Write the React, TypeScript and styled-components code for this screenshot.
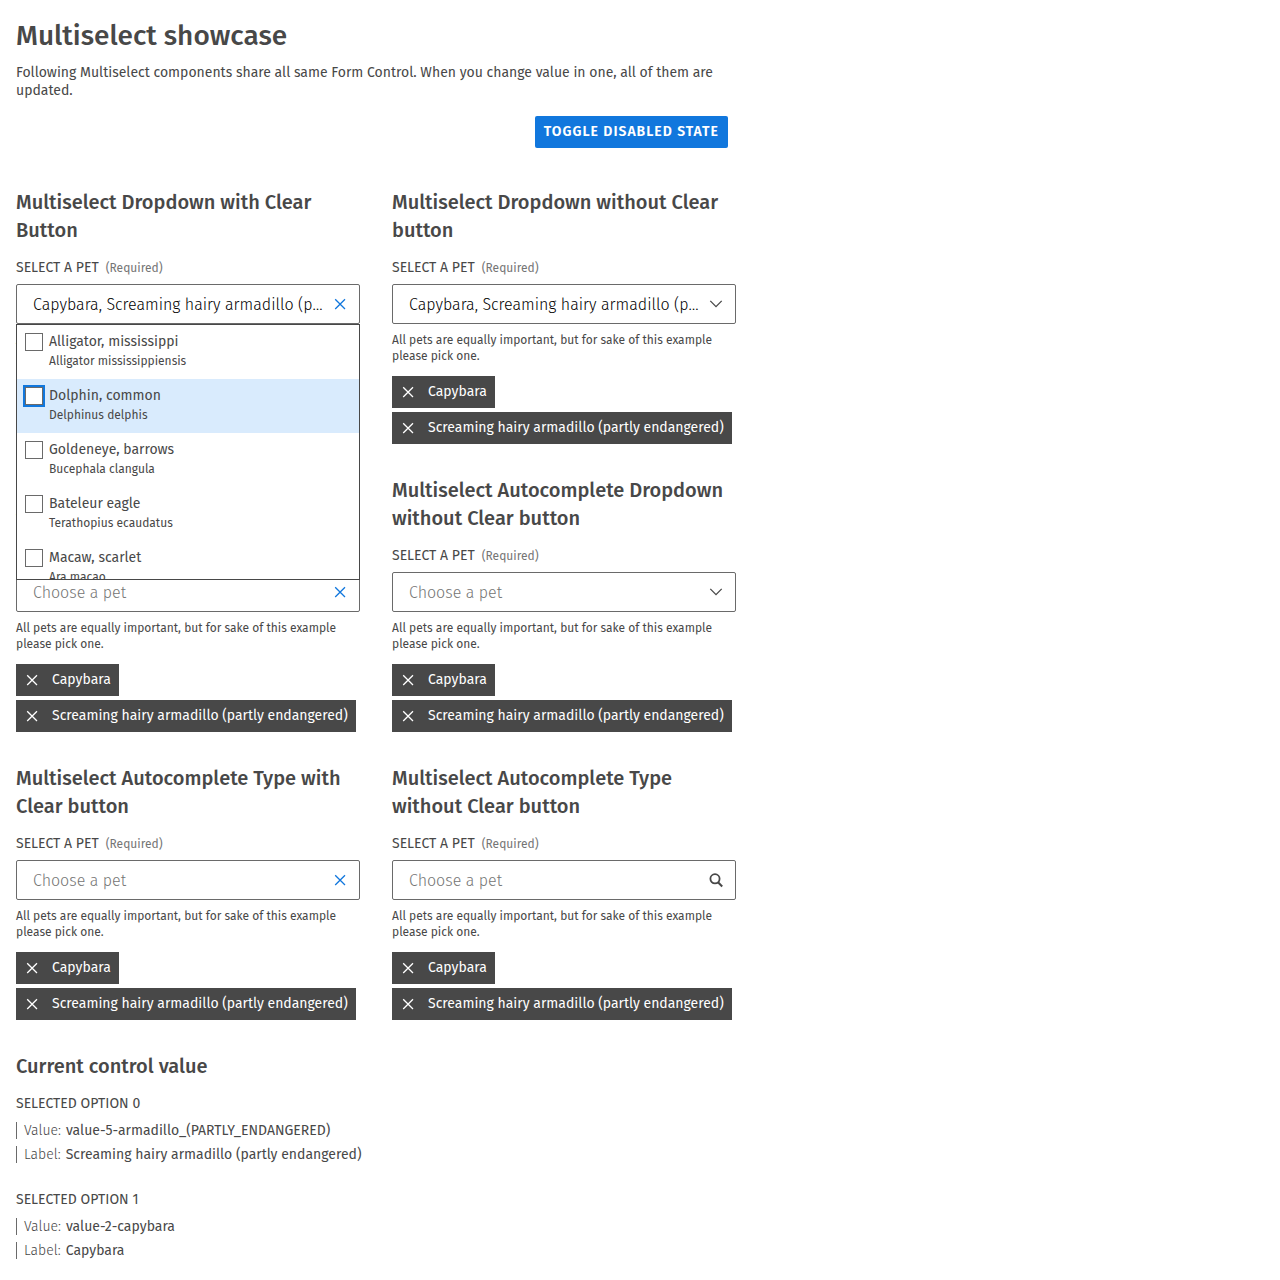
import { useId, useState } from 'react';
import styled, { createGlobalStyle, css } from 'styled-components';

const color = {
  text: '#484848',
  value: '#000',
  muted: '#757575',
  placeholder: '#757575',
  border: '#6a6a6a',
  primary: '#1177dd',
  highlight: '#d9ebfd',
};

const GlobalStyle = createGlobalStyle`
  *, *::before, *::after { box-sizing: border-box; }
  body {
    margin: 0;
    background: #fff;
    color: ${color.text};
    font-family: 'Fira Sans', 'Open Sans', 'Noto Sans', sans-serif;
    font-size: 14px;
    line-height: 18px;
  }
  h1, h2, h3, p, ul, dl, dd { margin: 0; padding: 0; }
  button, input { font: inherit; color: inherit; }
`;

const Page = styled.main`
  max-width: 752px;
  padding: 16px;
`;

const PageHeader = styled.header`
  display: flex;
  flex-direction: column;
  padding-right: 8px;
  margin-bottom: 40px;
`;

const PageTitle = styled.h1`
  margin-bottom: 8px;
  font-size: 28px;
  font-weight: 500;
  line-height: 40px;
`;

const PrimaryButton = styled.button`
  align-self: flex-end;
  height: 32px;
  margin-top: 16px;
  padding: 0 9px;
  border: 0;
  border-radius: 2px;
  background: ${color.primary};
  color: #fff;
  font-weight: 600;
  letter-spacing: 1px;
  text-transform: uppercase;
  cursor: pointer;
`;

const Grid = styled.div`
  display: grid;
  grid-template-columns: repeat(2, minmax(0, 1fr));
  gap: 32px;
`;

const SectionTitle = styled.h2`
  margin-bottom: 15px;
  font-size: 20px;
  font-weight: 500;
  line-height: 28px;
`;

const LabelRow = styled.div`
  display: flex;
  align-items: baseline;
  gap: 7px;
  margin-bottom: 7px;
`;

const FieldLabel = styled.label`
  text-transform: uppercase;
`;

const Required = styled.span`
  color: ${color.muted};
  font-size: 12px;
`;

const Field = styled.div`
  position: relative;
`;

const Control = styled.div<{ $disabled: boolean }>`
  display: flex;
  align-items: center;
  height: 40px;
  padding: 0 11px 0 16px;
  border: 1px solid ${color.border};
  border-radius: 2px;
  background: #fff;
  opacity: ${(p) => (p.$disabled ? 0.5 : 1)};
`;

const TextInput = styled.input`
  flex: 1;
  min-width: 0;
  height: 36px;
  padding: 0;
  border: 0;
  outline: 0;
  background: none;
  color: ${color.value};
  font-size: 16px;
  font-weight: 300;
  text-overflow: ellipsis;

  &::placeholder {
    color: ${color.placeholder};
    opacity: 1;
  }
`;

const IconButton = styled.button<{ $accent?: boolean }>`
  display: flex;
  flex: none;
  margin-left: 8px;
  padding: 0;
  border: 0;
  background: none;
  color: ${(p) => (p.$accent ? color.primary : color.text)};
  cursor: pointer;
`;

const Help = styled.p`
  margin: 8px 0 12px;
  font-size: 12px;
  line-height: 16px;
`;

const Tags = styled.ul`
  display: flex;
  flex-direction: column;
  align-items: flex-start;
  gap: 4px;
  list-style: none;
`;

const Tag = styled.button`
  display: flex;
  align-items: center;
  gap: 12px;
  height: 32px;
  padding: 0 8px;
  border: 0;
  background: ${color.text};
  color: #fff;
  white-space: nowrap;
  cursor: pointer;
`;

const Panel = styled.ul`
  position: absolute;
  z-index: 1;
  top: 100%;
  left: 0;
  right: 0;
  height: 256px;
  overflow-y: auto;
  scrollbar-width: none;
  border: 1px solid ${color.text};
  background: #fff;
  list-style: none;
`;

const Option = styled.label<{ $active: boolean }>`
  display: flex;
  align-items: flex-start;
  gap: 6px;
  padding: 8px 8px 10px;
  ${(p) =>
    p.$active &&
    css`
      background: ${color.highlight};
    `}
`;

const Checkbox = styled.input<{ $active: boolean }>`
  appearance: none;
  flex: none;
  width: 18px;
  height: 18px;
  margin: 0;
  border: 1px solid ${color.border};
  background: #fff;
  outline: ${(p) => (p.$active ? `2px solid ${color.primary}` : 'none')};

  &:checked {
    background: ${color.primary};
  }
`;

const OptionText = styled.span`
  display: flex;
  flex-direction: column;
  gap: 2px;
`;

const OptionNote = styled.small`
  font-size: 12px;
  line-height: 16px;
`;

const Values = styled.section`
  margin-top: 32px;
`;

const ValueGroup = styled.div`
  & + & {
    margin-top: 28px;
  }
`;

const ValueTitle = styled.h3`
  margin-bottom: 9px;
  font-size: 14px;
  font-weight: 400;
  line-height: 18px;
  text-transform: uppercase;
`;

const ValueList = styled.dl`
  display: flex;
  flex-direction: column;
  gap: 7px;
`;

const ValueRow = styled.div`
  display: flex;
  gap: 5px;
  padding-left: 7px;
  border-left: 1px solid ${color.border};
  line-height: 17px;
`;

const ValueName = styled.dt`
  font-weight: 300;
`;

const ValueData = styled.dd`
  font-weight: 400;
`;

const CloseIcon = () => (
  <svg width="16" height="16" viewBox="0 0 16 16" fill="none" stroke="currentColor" strokeWidth="1.3" aria-hidden="true">
    <path d="M3.2 3.2l9.8 9.8M13 3.2L3.2 13" />
  </svg>
);

const ChevronIcon = () => (
  <svg width="16" height="16" viewBox="0 0 16 16" fill="none" stroke="currentColor" strokeWidth="1.3" aria-hidden="true">
    <path d="M2.3 4.9L8 10.6 13.7 4.9" />
  </svg>
);

const SearchIcon = () => (
  <svg width="16" height="16" viewBox="0 0 16 16" fill="none" stroke="currentColor" strokeWidth="1.8" aria-hidden="true">
    <circle cx="7" cy="6.8" r="4.6" />
    <path d="M10 10.2L14.2 14.4" strokeWidth="2.1" />
  </svg>
);

type IconKind = 'clear' | 'open' | 'search';

const icons = { clear: CloseIcon, open: ChevronIcon, search: SearchIcon };
const iconNames = { clear: 'Clear selection', open: 'Show options', search: 'Search' };

const pets = [
  { name: 'Alligator, mississippi', note: 'Alligator mississippiensis' },
  { name: 'Dolphin, common', note: 'Delphinus delphis' },
  { name: 'Goldeneye, barrows', note: 'Bucephala clangula' },
  { name: 'Bateleur eagle', note: 'Terathopius ecaudatus' },
  { name: 'Macaw, scarlet', note: 'Ara macao' },
];

const selected = [
  { value: 'value-5-armadillo_(PARTLY_ENDANGERED)', label: 'Screaming hairy armadillo (partly endangered)' },
  { value: 'value-2-capybara', label: 'Capybara' },
];

const tagLabels = ['Capybara', 'Screaming hairy armadillo (partly endangered)'];

interface MultiselectProps {
  title: string;
  icon: IconKind;
  dropdown?: boolean;
  open?: boolean;
  disabled: boolean;
}

function OptionPanel() {
  const [active, setActive] = useState(1);
  return (
    <Panel>
      {pets.map((pet, i) => (
        <li key={pet.name} onMouseEnter={() => setActive(i)}>
          <Option $active={i === active}>
            <Checkbox type="checkbox" $active={i === active} />
            <OptionText>
              {pet.name}
              <OptionNote>{pet.note}</OptionNote>
            </OptionText>
          </Option>
        </li>
      ))}
    </Panel>
  );
}

function Multiselect({ title, icon, dropdown, open, disabled }: MultiselectProps) {
  const id = useId();
  const Icon = icons[icon];
  return (
    <section>
      <SectionTitle>{title}</SectionTitle>
      <LabelRow>
        <FieldLabel htmlFor={id}>Select a pet</FieldLabel>
        <Required>(Required)</Required>
      </LabelRow>
      <Field>
        <Control $disabled={disabled}>
          <TextInput
            id={id}
            type="text"
            placeholder="Choose a pet"
            readOnly={dropdown}
            disabled={disabled}
            defaultValue={dropdown ? tagLabels.join(', ') : ''}
          />
          <IconButton type="button" $accent={icon === 'clear'} aria-label={iconNames[icon]} disabled={disabled}>
            <Icon />
          </IconButton>
        </Control>
        {open && <OptionPanel />}
      </Field>
      <Help>All pets are equally important, but for sake of this example please pick one.</Help>
      <Tags>
        {tagLabels.map((label) => (
          <li key={label}>
            <Tag type="button" disabled={disabled}>
              <CloseIcon />
              {label}
            </Tag>
          </li>
        ))}
      </Tags>
    </section>
  );
}

export default function App() {
  const [disabled, setDisabled] = useState(false);
  return (
    <>
      <GlobalStyle />
      <Page>
        <PageHeader>
          <PageTitle>Multiselect showcase</PageTitle>
          <p>
            Following Multiselect components share all same Form Control. When you change value in one, all of them
            are updated.
          </p>
          <PrimaryButton type="button" onClick={() => setDisabled(!disabled)}>
            Toggle disabled state
          </PrimaryButton>
        </PageHeader>
        <Grid>
          <Multiselect title="Multiselect Dropdown with Clear Button" icon="clear" dropdown open disabled={disabled} />
          <Multiselect title="Multiselect Dropdown without Clear button" icon="open" dropdown disabled={disabled} />
          <Multiselect title="Multiselect Autocomplete Dropdown with Clear button" icon="clear" disabled={disabled} />
          <Multiselect title="Multiselect Autocomplete Dropdown without Clear button" icon="open" disabled={disabled} />
          <Multiselect title="Multiselect Autocomplete Type with Clear button" icon="clear" disabled={disabled} />
          <Multiselect title="Multiselect Autocomplete Type without Clear button" icon="search" disabled={disabled} />
        </Grid>
        <Values>
          <SectionTitle>Current control value</SectionTitle>
          {selected.map((item, i) => (
            <ValueGroup key={item.value}>
              <ValueTitle>Selected option {i}</ValueTitle>
              <ValueList>
                <ValueRow>
                  <ValueName>Value:</ValueName>
                  <ValueData>{item.value}</ValueData>
                </ValueRow>
                <ValueRow>
                  <ValueName>Label:</ValueName>
                  <ValueData>{item.label}</ValueData>
                </ValueRow>
              </ValueList>
            </ValueGroup>
          ))}
        </Values>
      </Page>
    </>
  );
}
